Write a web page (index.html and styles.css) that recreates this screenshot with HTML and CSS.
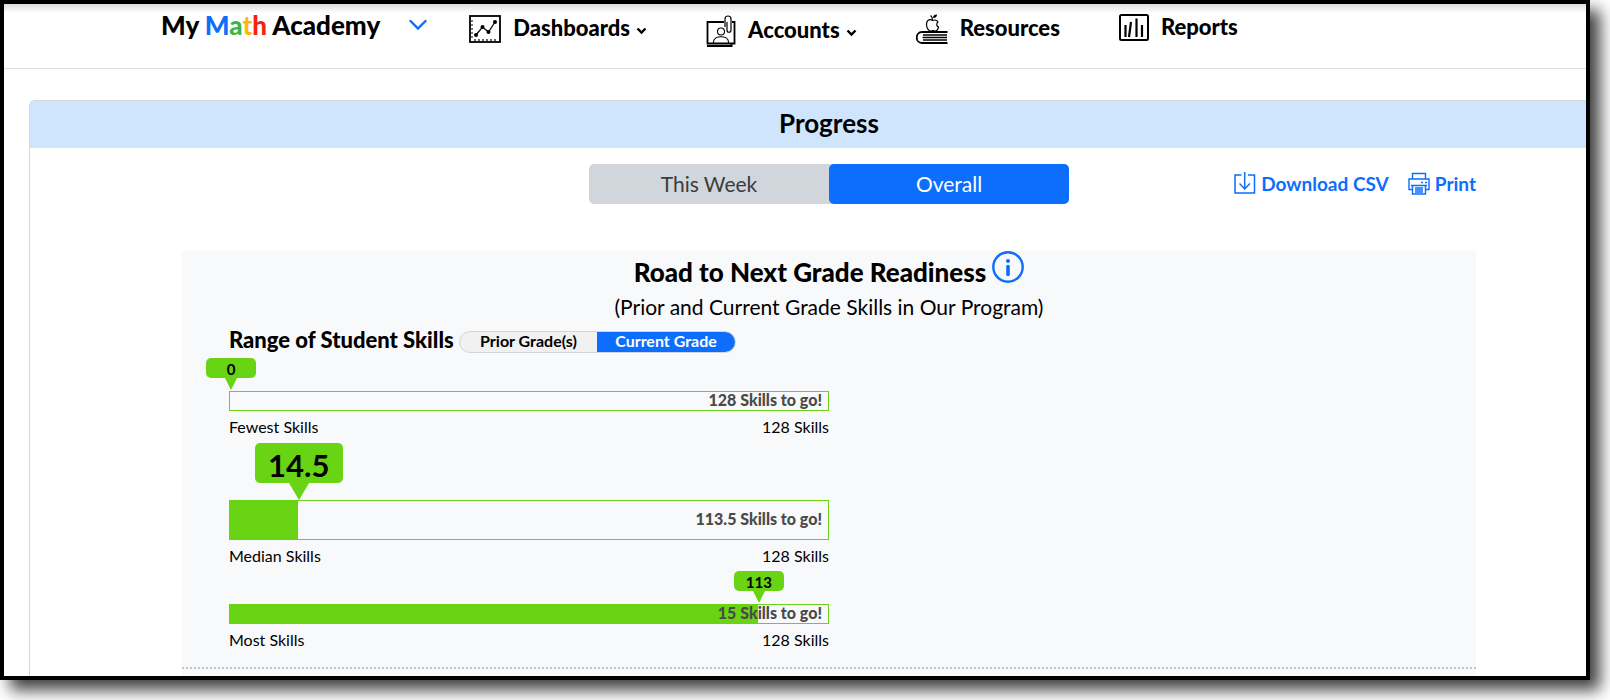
FILE: index.html
```html
<!DOCTYPE html>
<html lang="en">
<head>
    <meta charset="UTF-8">
    <title>My Math Academy - Progress</title>
    <link rel="stylesheet" href="styles.css">
</head>
<body>
    <div id="frame">
        <header class="topbar">
            <button class="product" type="button">
                <span class="logo">My <span class="blue">M</span><span class="green">a</span><span class="yellow">t</span><span class="red">h</span> Academy</span>
                <svg width="18" height="12" viewBox="0 0 18 12"><path d="M1.5 2 L9 9.5 L16.5 2" fill="none" stroke="#0d6efd" stroke-width="2.4" stroke-linecap="round"/></svg>
            </button>
            <nav class="menu">
                <a href="#">
                    <svg width="32" height="30" viewBox="0 0 32 30" fill="none" stroke="#000">
                        <rect x="1" y="2" width="30" height="26" stroke-width="1.8"/>
                        <path d="M2 7h2M2 11h2M2 15h2M2 19h2M2 23h2M6 27v-2M10 27v-2M14 27v-2M18 27v-2M22 27v-2M26 27v-2" stroke-width="1.2"/>
                        <path d="M7 21 L13.5 13 L19.5 18 L26 8" stroke-width="1.2"/>
                        <g fill="#000" stroke="none"><circle cx="7" cy="21" r="2"/><circle cx="13.5" cy="13" r="2"/><circle cx="19.5" cy="18" r="2"/><circle cx="26" cy="8" r="2"/></g>
                    </svg>
                    <span>Dashboards</span>
                    <svg class="caret" width="11" height="8" viewBox="0 0 11 8"><path d="M1.5 1.5 L5.5 5.5 L9.5 1.5" fill="none" stroke="#000" stroke-width="2.4"/></svg>
                </a>
                <a href="#">
                    <svg width="30" height="34" viewBox="0 0 30 34" fill="none" stroke="#000">
                        <path d="M18 8H1.500V29.500H28.500V8H26" stroke-width="1.8"/>
                        <path d="M1 32H25.500V30" stroke-width="2"/>
                        <circle cx="15" cy="17.500" r="3.500" stroke-width="1.1"/>
                        <path d="M7.500 29v-1c0-7 15-7 15 0v1" stroke-width="1.1"/>
                        <path d="M19 13V5c0-4 6-4 6 0v11c0 3-4 3-4 0V8" stroke-width="1.2"/>
                    </svg>
                    <span>Accounts</span>
                    <svg class="caret" width="11" height="8" viewBox="0 0 11 8"><path d="M1.5 1.5 L5.5 5.5 L9.5 1.5" fill="none" stroke="#000" stroke-width="2.4"/></svg>
                </a>
                <a href="#">
                    <svg width="32" height="30" viewBox="0 0 32 30" fill="none" stroke="#000">
                        <path d="M31.500 18H6c-7 0-7 11 0 11h25.500" stroke-width="1.8"/>
                        <path d="M31 21H7M31 23.500H6.500M31 26H7" stroke-width="1.3"/>
                        <path d="M16.500 6.500c-3.500-2-6 0-6 4 0 3 2 6.500 4 6.500 1 0 1.500-.5 2.500-.5s1.500.5 2.500.5c1.500 0 2.500-2 3-4-2-.5-2.500-3.500-.5-5-1.500-2.500-3.500-2.300-5.500-1.500z" stroke-width="1.200"/>
                        <path d="M16.500 6c0-2-.5-3.500-2-4.500" stroke-width="1.2"/>
                        <path d="M17 4c0-2.500 1.500-3.500 4-3.500 0 2.500-1.500 3.500-4 3.500z" fill="#000" stroke="none"/>
                    </svg>
                    <span>Resources</span>
                </a>
                <a href="#">
                    <svg width="30" height="28" viewBox="0 0 30 28" fill="none" stroke="#000">
                        <rect x="1" y="1" width="28" height="25" rx="1.500" stroke-width="2"/>
                        <path d="M6.500 11v12M10 23l2-15M17.500 4.500v18.500M23 11v12" stroke-width="2.200"/>
                    </svg>
                    <span>Reports</span>
                </a>
            </nav>
        </header>

        <main class="panel">
            <h1>Progress</h1>
            <div class="content">
                <div class="tools">
                    <div class="switch">
                        <button type="button">This Week</button>
                        <button type="button" class="on">Overall</button>
                    </div>
                    <div class="actions">
                        <a href="#">
                            <svg width="22" height="24" viewBox="0 0 22 24" fill="none" stroke="#0d6efd" stroke-width="1.5">
                                <path d="M7.500 4H1v18h19.500V4H14"/>
                                <path d="M10.700 1v17M5.500 12.500l5.200 5.500 5.200-5.500"/>
                            </svg>
                            Download CSV
                        </a>
                        <button type="button">
                            <svg width="22" height="24" viewBox="0 0 22 24" fill="none" stroke="#0d6efd" stroke-width="1.4">
                                <path d="M4.500 8V2.500h13V8M4 18.500H1V8h20v10.500h-3"/>
                                <path d="M3 14.500h16M4.500 14.500V23h13v-8.500M7 17h8M7 19h8M7 21h8"/>
                                <path d="M13 11.500h2M17 11.500h2"/>
                            </svg>
                            Print
                        </button>
                    </div>
                </div>

                <section class="readiness">
                    <div class="title">
                        <h2>Road to Next Grade Readiness</h2>
                        <button type="button" class="info" aria-label="More information">
                            <svg width="32" height="32" viewBox="0 0 32 32"><circle cx="16" cy="16" r="14.700" fill="none" stroke="#0d6efd" stroke-width="2.400"/><circle cx="16" cy="10" r="2" fill="#0d6efd"/><path d="M16 15.500v8" stroke="#0d6efd" stroke-width="3.600" stroke-linecap="round"/></svg>
                        </button>
                    </div>
                    <p class="sub">(Prior and Current Grade Skills in Our Program)</p>

                    <div class="skills">
                        <div class="range">
                            <h3>Range of Student Skills</h3>
                            <div class="pills">
                                <button type="button">Prior Grade(s)</button>
                                <button type="button" class="on">Current Grade</button>
                            </div>
                        </div>

                        <div class="bar">
                            <div class="fill" style="width: 0%"></div>
                            <div class="tip" style="left: 0%">0</div>
                            <span class="togo">128 Skills to go!</span>
                        </div>
                        <p class="legend"><span>Fewest Skills</span><span>128 Skills</span></p>

                        <div class="bar big">
                            <div class="fill" style="width: 11.33%"></div>
                            <div class="tip" style="left: 11.33%">14.5</div>
                            <span class="togo">113.5 Skills to go!</span>
                        </div>
                        <p class="legend"><span>Median Skills</span><span>128 Skills</span></p>

                        <div class="bar">
                            <div class="fill" style="width: 88.28%"></div>
                            <div class="tip" style="left: 88.28%">113</div>
                            <span class="togo">15 Skills to go!</span>
                        </div>
                        <p class="legend"><span>Most Skills</span><span>128 Skills</span></p>
                    </div>
                    <hr>
                </section>
            </div>
        </main>
    </div>
</body>
</html>
```
FILE: styles.css
```css
*{ box-sizing: border-box;}
body,p,h1,h2,h3{ margin: 0;}
a{text-decoration:none;}
body{
    background-color: #fff;
    color: #000;
    font-family: Lato, "Liberation Sans", sans-serif;
}
button{
    margin: 0;
    padding: 0;
    border: 0;
    background: none;
    color: inherit;
    font: inherit;
    cursor: pointer;
}
svg{
    display: block;
    flex: none;
}
#frame{
    margin: 0 20px 20px 0;
    border: 4px solid #000;
    background-color: #fff;
    box-shadow: 10px 10px 15px rgba(0,0,0,.75);
    overflow: hidden;
}

/* top navigation */
.topbar{
    display: flex;
    align-items: flex-start;
    height: 65px;
    padding: 10px 0 0 157px;
    border-bottom: 1px solid #ddd;
    background: linear-gradient(#ddd, #fff 9px);
    white-space: nowrap;
}
.product{
    display: flex;
    align-items: center;
    gap: 29px;
    height: 22px;
    margin-right: 42px;
}
.logo{
    font-size: 26px;
    font-weight: 900;
}
.blue{ color: #0d6efd;}
.green{ color: #3bb54a;}
.yellow{ color: #fdb913;}
.red{ color: #f5230a;}
.menu{
    display: flex;
    align-items: flex-start;
    gap: 59px;
}
.menu a{
    display: flex;
    align-items: center;
    color: #000;
    font-size: 22px;
    font-weight: 900;
    line-height: 26px;
}
.menu span{
    margin-left: 12px;
    padding-bottom: 2px;
}
.caret{
    margin: 3px 0 0 6px;
}

/* progress panel, runs past the right edge of the frame */
.panel{
    margin: 31px -43px 0 25px;
    border: 1px solid #d8d8d8;
    border-bottom: 0;
    border-radius: 6px 6px 0 0;
}
.panel h1{
    background-color: #cfe5fd;
    font-size: 26px;
    font-weight: 700;
    line-height: 44px;
    height: 47px;
    text-align: center;
}
.content{
    padding: 16px 152px 0;
}
.tools{
    display: grid;
    grid-template-columns: 1fr 480px 1fr;
    height: 87px;
    align-items: start;
}
.switch{
    grid-column: 2;
    display: flex;
    border-radius: 5px;
    background-color: #d1d5dc;
}
.switch button{
    flex: 1;
    height: 40px;
    padding-bottom: 2px;
    border-radius: 5px;
    color: #3c3c3c;
    font-size: 21px;
}
.switch .on{
    background-color: #0d6efd;
    color: #fff;
}
.actions{
    display: flex;
    justify-content: flex-end;
    gap: 19px;
    height: 38px;
    white-space: nowrap;
}
.actions a,
.actions button{
    display: flex;
    align-items: center;
    gap: 5px;
    color: #0d6efd;
    font-size: 19px;
    font-weight: 700;
}

.readiness{
    padding-bottom: 7px;
    background-color: #f8f9fb;
}
.title{
    display: flex;
    justify-content: center;
    align-items: flex-start;
    gap: 6px;
    height: 44px;
}
.title h2{
    font-size: 26px;
    font-weight: 900;
    line-height: 42px;
}
.sub{
    font-size: 21px;
    line-height: 24px;
    text-align: center;
}
.skills{
    width: 647px;
    padding: 12px 0 0 47px;
}
.range{
    display: flex;
    align-items: center;
    gap: 5px;
    height: 22px;
    margin-bottom: 38px;
    white-space: nowrap;
}
.range h3{
    padding-bottom: 4px;
    font-size: 22px;
    font-weight: 900;
    line-height: 22px;
}
.pills{
    display: flex;
    width: 277px;
    height: 22px;
    border: 1px solid #d5d5d5;
    border-radius: 11px;
    background-color: #f1f1f1;
    overflow: hidden;
}
.pills button{
    flex: 1;
    padding-bottom: 2px;
    font-size: 16px;
    font-weight: 700;
    line-height: 18px;
}
.pills .on{
    background-color: #0d6efd;
    color: #fff;
}

/* skill bars */
.bar{
    position: relative;
    height: 20px;
    border: 1px solid #68d414;
}
.fill{
    height: 100%;
    background-color: #68d414;
}
.togo{
    position: absolute;
    top: 0;
    right: 6px;
    color: #4a4a4a;
    font-size: 16px;
    font-weight: 900;
    line-height: 16px;
}
.tip{
    position: absolute;
    bottom: 32px;
    width: 50px;
    height: 20px;
    margin-left: -24px;
    border-radius: 5px;
    background-color: #68d414;
    font-size: 15px;
    font-weight: 700;
    line-height: 22px;
    text-align: center;
}
.tip:after{
    content: "";
    position: absolute;
    top: 100%;
    left: 50%;
    margin-left: -6px;
    border: 6px solid transparent;
    border-top: 12px solid #68d414;
    border-bottom: 0;
}
.big{
    height: 40px;
}
.big .togo{
    line-height: 36px;
}
.big .tip{
    bottom: 56px;
    width: 88px;
    height: 40px;
    margin-left: -43px;
    font-size: 31px;
    line-height: 44px;
}
.big .tip:after{
    margin-left: -10px;
    border-width: 17px 10px 0;
}
.legend{
    display: flex;
    justify-content: space-between;
    margin: 6px 0 63px;
    font-size: 16px;
    line-height: 20px;
}
.big + .legend{
    margin-bottom: 38px;
}
.legend:last-child{
    margin-bottom: 17px;
}
hr{
    margin: 0;
    border: 0;
    border-top: 2px dotted #c4c6ca;
}
```
